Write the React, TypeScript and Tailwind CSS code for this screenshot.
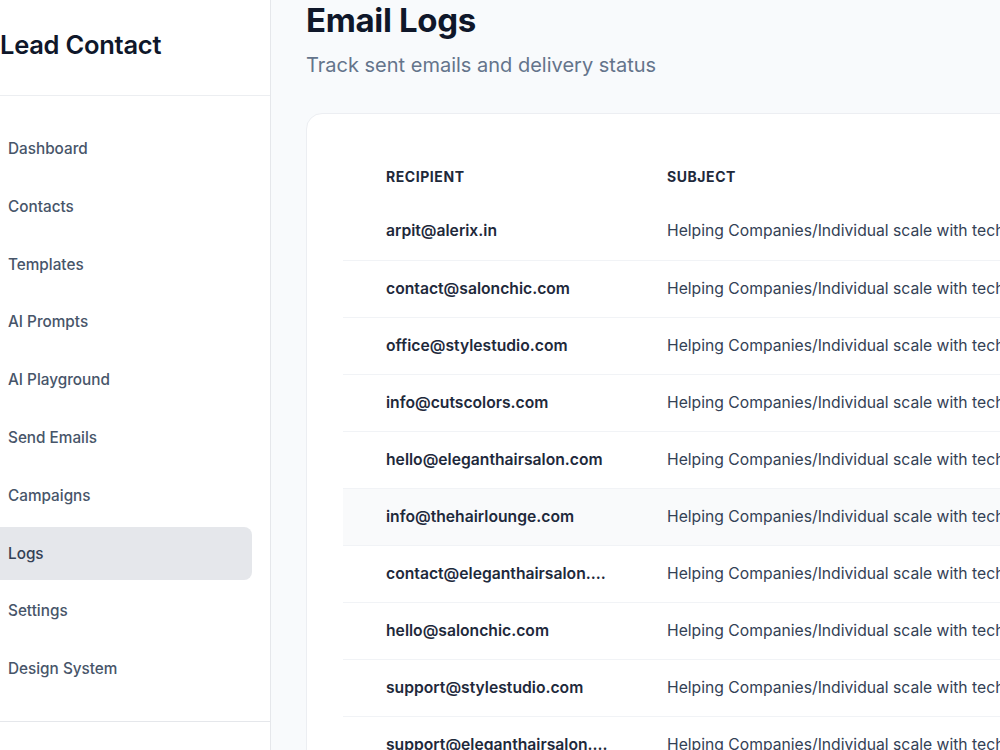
import React from "react";

const navItems = [
  "Dashboard",
  "Contacts",
  "Templates",
  "AI Prompts",
  "AI Playground",
  "Send Emails",
  "Campaigns",
  "Logs",
  "Settings",
  "Design System",
];

const logs = [
  "arpit@alerix.in",
  "contact@salonchic.com",
  "office@stylestudio.com",
  "info@cutscolors.com",
  "hello@eleganthairsalon.com",
  "info@thehairlounge.com",
  "contact@eleganthairsalon.com",
  "hello@salonchic.com",
  "support@stylestudio.com",
  "support@eleganthairsalon.com",
];

const subject = "Helping Companies/Individual scale with technology and automation";

const shorten = (s: string) => (s.length > 27 ? s.slice(0, 25) + "..." : s);

export default function App() {
  return (
    <div
      className="flex h-[750px] w-[1000px] overflow-hidden bg-[#f8fafc] text-[#0f172a]"
      style={{ fontFamily: "Inter, 'Noto Sans', sans-serif" }}
    >
      <aside className="flex w-[271px] shrink-0 flex-col border-r border-[#e5e7eb] bg-white">
        <div className="flex h-[96px] items-center border-b border-[#eceef1] pb-1">
          <h1 className="text-[25.5px] font-semibold tracking-[-0.01em] text-[#0f172a]">Lead Contact</h1>
        </div>
        <nav className="flex w-[252px] flex-col gap-[4.8px] pt-[26px]">
          {navItems.map((item) => (
            <div
              key={item}
              className={
                item === "Logs"
                  ? "flex h-[53px] items-center rounded-r-lg bg-[#e5e7eb] px-2 pt-[2px] text-[15.3px] font-medium text-[#334155]"
                  : "flex h-[53px] items-center px-2 pt-[2px] text-[15.3px] font-medium text-[#475569]"
              }
            >
              {item}
            </div>
          ))}
        </nav>
        <div className="mt-[26px] border-t border-[#e5e7eb]" />
      </aside>

      <main className="min-w-0 flex-1 pl-[35px]">
        <h2 className="mt-[-4px] text-[33px] font-bold leading-[48px] tracking-[-0.01em] text-[#0f172a]">
          Email Logs
        </h2>
        <p className="mt-[6px] text-[20px] leading-[30px] text-[#64748b]">Track sent emails and delivery status</p>

        <div className="mt-[33px] w-[900px] rounded-2xl border border-[#eceef2] bg-white p-[36px]">
          <table className="w-full table-fixed border-collapse text-left">
            <thead>
              <tr className="h-[53px]">
                <th className="w-[324px] pl-[43px] text-[14px] font-bold tracking-[0.04em] text-[#1e293b]">
                  RECIPIENT
                </th>
                <th className="text-[14px] font-bold tracking-[0.04em] text-[#1e293b]">SUBJECT</th>
              </tr>
            </thead>
            <tbody>
              {logs.map((email, i) => (
                <tr
                  key={email}
                  className={
                    i === 5
                      ? "h-[57px] border-b border-[#f1f3f6] bg-[#f9fafb]"
                      : "h-[57px] border-b border-[#f1f3f6]"
                  }
                >
                  <td className="pl-[43px] pr-4 text-[15.7px] font-semibold text-[#1e293b]">
                    <div className="whitespace-nowrap">{shorten(email)}</div>
                  </td>
                  <td className="text-[15.7px] text-[#334155]">
                    <div className="whitespace-nowrap">{subject}</div>
                  </td>
                </tr>
              ))}
            </tbody>
          </table>
        </div>
      </main>
    </div>
  );
}
